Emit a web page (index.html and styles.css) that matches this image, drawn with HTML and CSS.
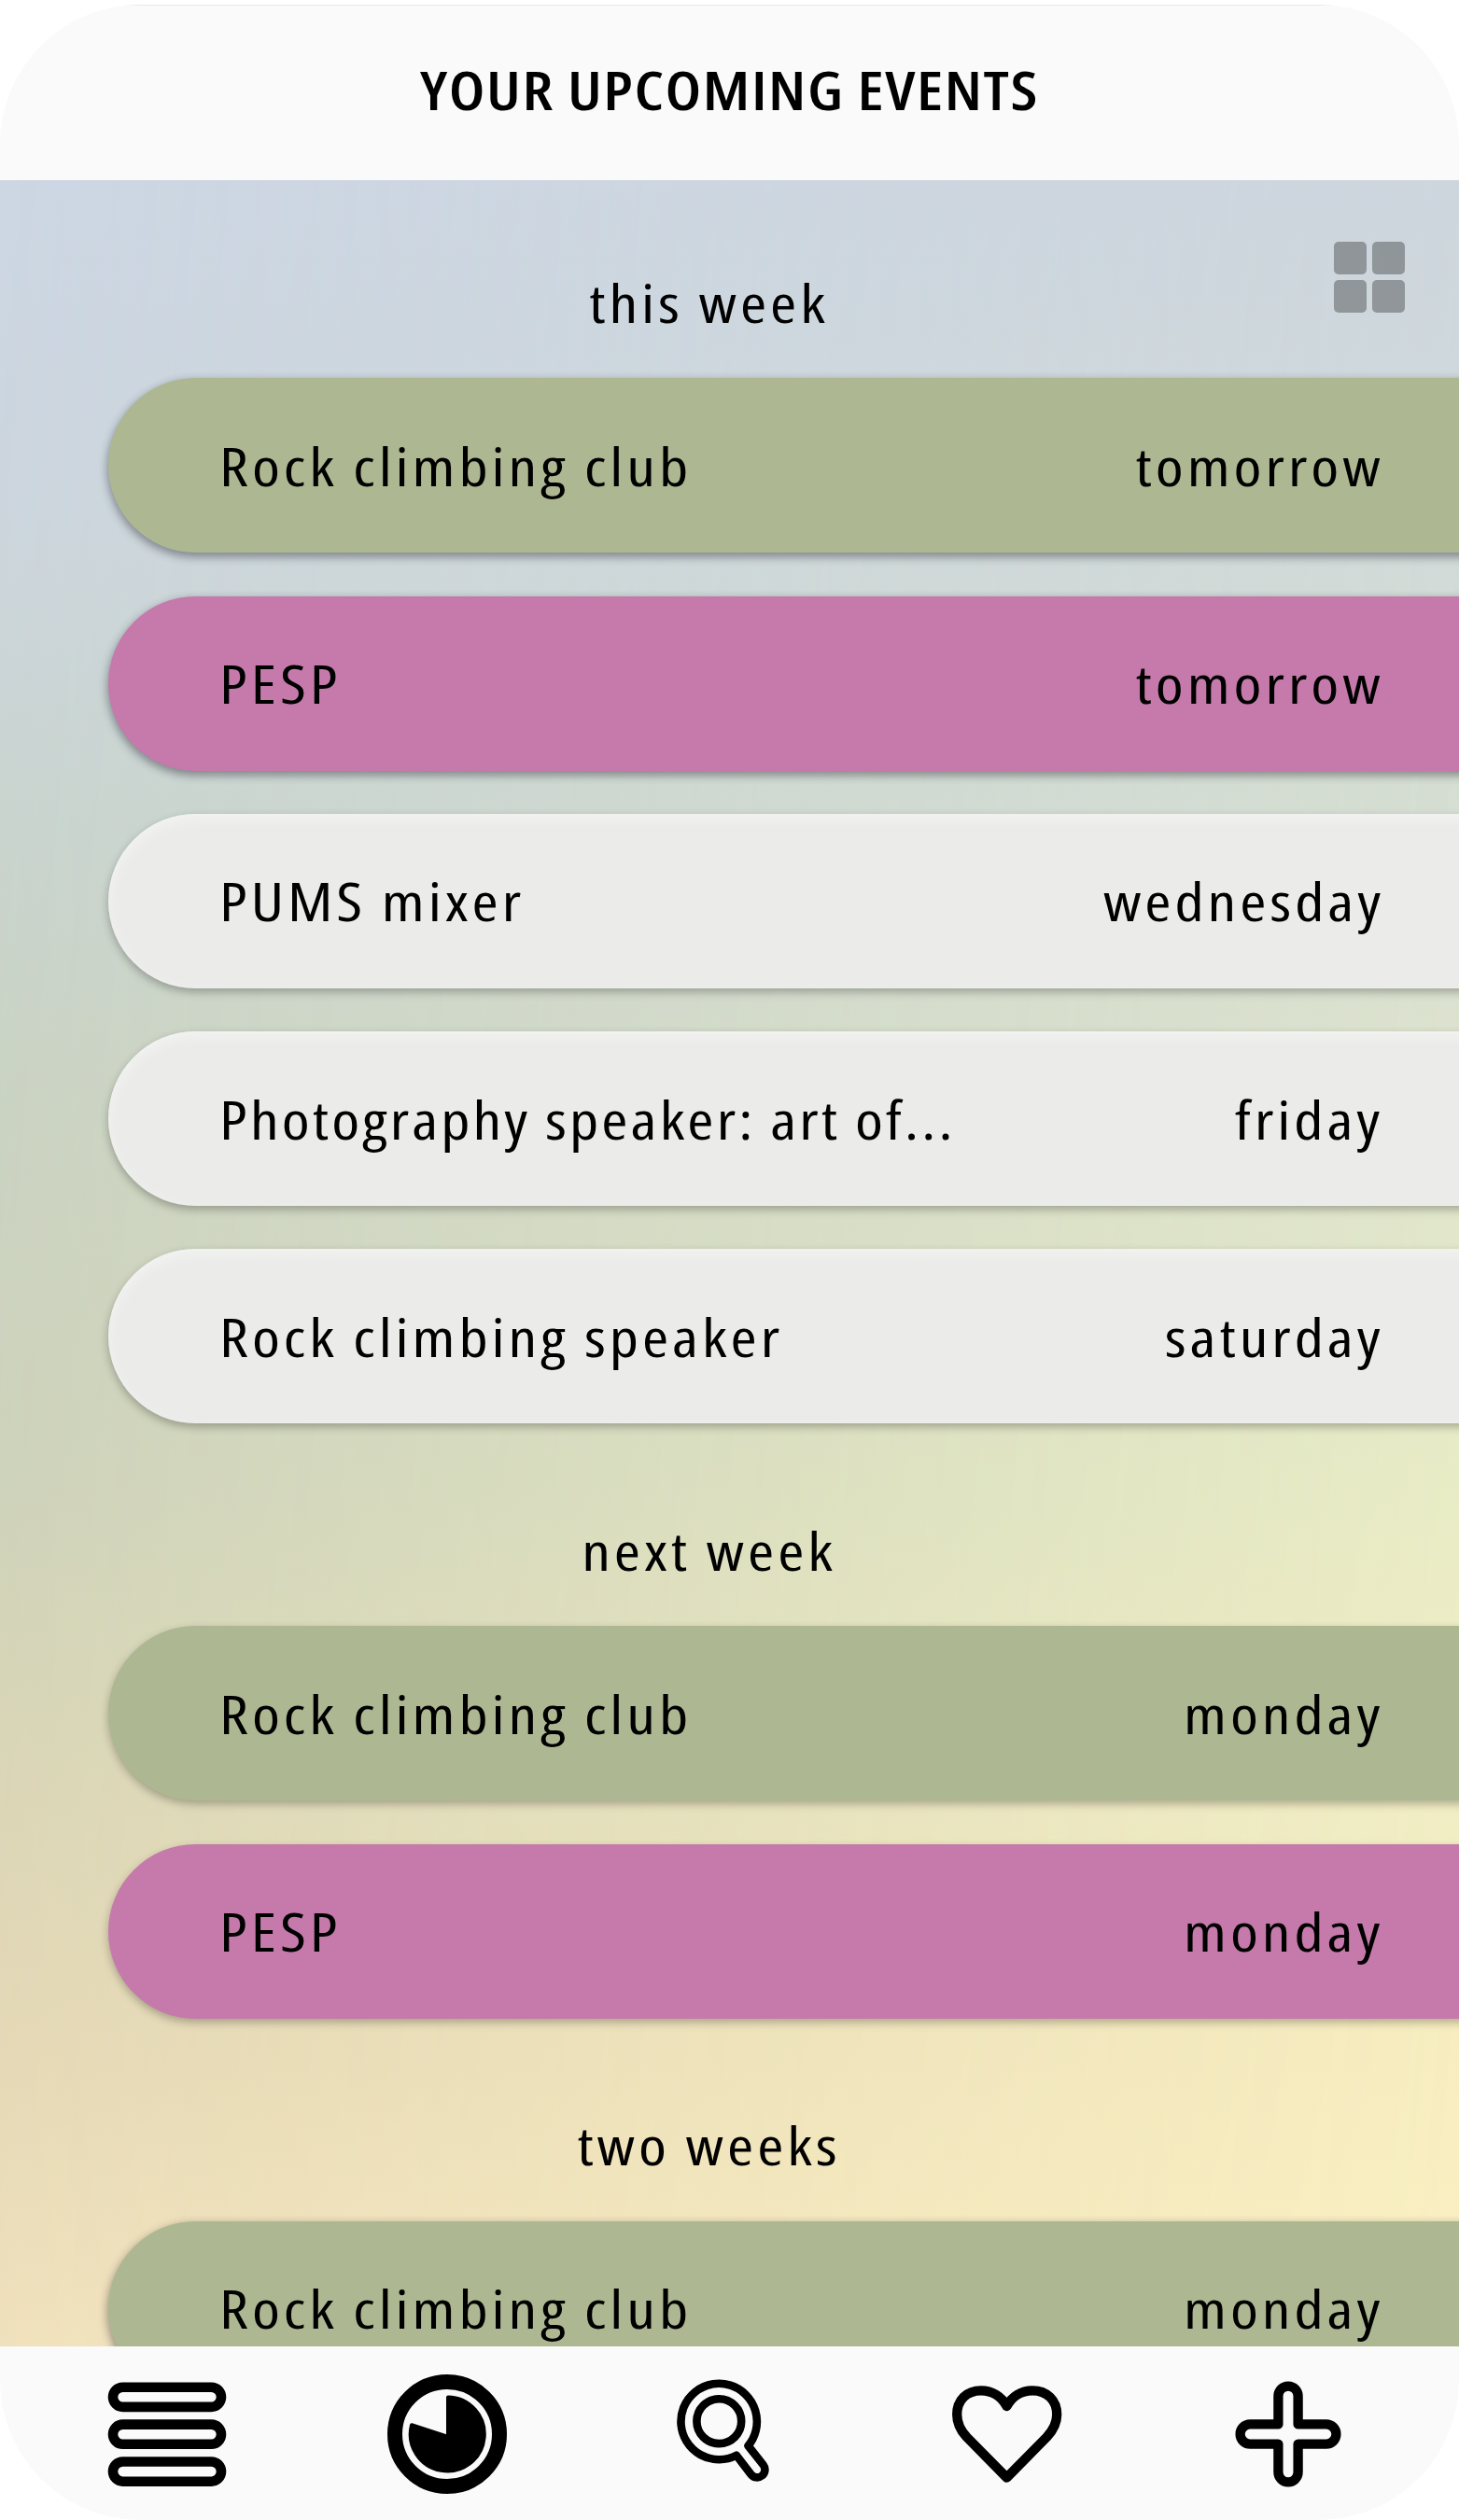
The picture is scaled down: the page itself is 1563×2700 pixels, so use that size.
FILE: index.html
```html
<!DOCTYPE html>
<html lang="en">
<head>
<meta charset="utf-8">
<title>Your upcoming events</title>
<link rel="stylesheet" href="styles.css">
</head>
<body>
<div class="phone">
  <header class="header"><h1 class="title">YOUR UPCOMING EVENTS</h1></header>
  <main class="content">
    <button class="grid-toggle" aria-label="Grid view"><i></i><i></i><i></i><i></i></button>
    <section class="week">
      <h2 class="week-name">this week</h2>
      <div class="event green near"><span class="name">Rock climbing club</span><span class="day">tomorrow</span></div>
      <div class="event pink near"><span class="name">PESP</span><span class="day">tomorrow</span></div>
      <div class="event plain"><span class="name">PUMS mixer</span><span class="day">wednesday</span></div>
      <div class="event plain"><span class="name long">Photography speaker: art of...</span><span class="day">friday</span></div>
      <div class="event plain"><span class="name">Rock climbing speaker</span><span class="day">saturday</span></div>
    </section>
    <section class="week">
      <h2 class="week-name">next week</h2>
      <div class="event green"><span class="name">Rock climbing club</span><span class="day">monday</span></div>
      <div class="event pink"><span class="name">PESP</span><span class="day">monday</span></div>
    </section>
    <section class="week">
      <h2 class="week-name">two weeks</h2>
      <div class="event green near"><span class="name">Rock climbing club</span><span class="day">monday</span></div>
    </section>
  </main>
  <nav class="nav">
    <a class="tab"><svg width="128" height="128" viewBox="0 0 128 128" fill="none" stroke="#000" stroke-width="10.6"><rect x="6" y="13.7" width="116" height="21.2" rx="10.6"/><rect x="6" y="53.6" width="116" height="21.2" rx="10.6"/><rect x="6" y="93.5" width="116" height="21.2" rx="10.6"/></svg></a>
    <a class="tab"><svg width="128" height="128" viewBox="0 0 128 128"><circle cx="64" cy="64" r="56" fill="none" stroke="#000" stroke-width="16"/><path d="M65 24.5A39.5 39.5 0 1 1 26 54.2L65 67Z" stroke="#000" stroke-width="4" stroke-linejoin="round"/></svg></a>
    <a class="tab"><svg width="150" height="150" viewBox="4 4 150 150" fill="none" stroke="#000" stroke-width="8.6" stroke-linejoin="round"><circle cx="70.3" cy="65.2" r="23.9"/><path d="M101.5 91.5L117.6 111.8A8.3 8.3 0 0 1 104.6 122.2L88.8 101.7A40.7 40.7 0 1 1 101.5 91.5Z"/></svg></a>
    <a class="tab"><svg width="160" height="150" viewBox="0 4 160 150" fill="none" stroke="#000" stroke-width="10.3" stroke-linejoin="round"><path d="M79.5 49C74 39 64 32.3 52 32.3C36.5 32.3 26.2 42.5 26.2 58C26.2 66 29.5 74.5 36.5 82L79.5 125.6L122.5 82C129.5 74.5 133.2 66 133.2 58C133.2 42.5 122.5 32.3 107 32.3C95 32.3 85 39 79.5 49Z"/></svg></a>
    <a class="tab"><svg width="128" height="128" viewBox="0 0 128 128" fill="none" stroke="#000" stroke-width="10.3" stroke-linejoin="round"><path d="M53.4 53.4V23.2A10.6 10.6 0 0 1 74.6 23.2V53.4H104.8A10.6 10.6 0 0 1 104.8 74.6H74.6V104.8A10.6 10.6 0 0 1 53.4 104.8V74.6H23.2A10.6 10.6 0 0 1 23.2 53.4Z"/></svg></a>
  </nav>
</div>
</body>
</html>
```
FILE: styles.css
```css
* { box-sizing: border-box; }

body {
  margin: 0;
  background: #fff;
  color: #000;
  font: 400 57px/68px "Open Sans", sans-serif;
  font-stretch: 75%;
  letter-spacing: 3.3px;
}

.phone {
  display: flex;
  flex-direction: column;
  width: 1563px;
  height: 2700px;
  padding-top: 5px;
  overflow: hidden;
}

.header {
  flex: none;
  height: 187.5px;
  padding-top: 57px;
  border-radius: 150px 150px 0 0;
  background: linear-gradient(#e8e8e8, #e8e8e8) 133px 0 / 1297px 1px no-repeat #fafafa;
  text-align: center;
}

/* the condensed face is widened a little */
.title, .week-name, .name, .day { transform: scaleX(1.195); }
.name { transform-origin: left; }
.day { transform-origin: right; }

.title {
  margin: 0;
  font-size: 57px;
  font-weight: 600;
  line-height: 68px;
  letter-spacing: 1.3px;
}

.content {
  position: relative;
  z-index: 0;
  flex: 1;
  min-height: 0;
  padding: 98.5px 0 0 116px;
  overflow: hidden;
  display: flex;
  flex-direction: column;
  gap: 102.7px;
  background: linear-gradient(#cdd7e4 0%, #cdd6de 15%, #c9d4cf 30%, #cad2c1 44%, #cdd1ba 60%, #d8d4b6 73%, #e4d7b6 87%, #f0e0bd 100%);
}

/* warmer right side of the backdrop, faded in across the width */
.content::before {
  content: "";
  position: absolute;
  inset: 0;
  z-index: -1;
  background: linear-gradient(#cdd5dc 0%, #cfd8da 10%, #d7dfd2 30%, #e2e7cc 47%, #e9edc6 60%, #f1eec5 74%, #f7edc0 86%, #faf0c2 100%);
  -webkit-mask-image: linear-gradient(95deg, transparent, #000);
  mask-image: linear-gradient(95deg, transparent, #000);
}

.grid-toggle {
  position: absolute;
  top: 66.5px;
  right: 58px;
  display: grid;
  grid-template-columns: 35px 35px;
  grid-auto-rows: 35px;
  gap: 5.6px;
  padding: 0;
  border: 0;
  background: none;
}

.grid-toggle i {
  border-radius: 5px;
  background: rgba(0, 0, 0, .3);
}

.week {
  flex: none;
  display: flex;
  flex-direction: column;
  gap: 46.3px;
}

.week-name {
  width: 1287px;
  margin: 0;
  font-size: 57px;
  font-weight: 400;
  line-height: 67px;
  height: 68px;
  text-align: center;
}

.event {
  display: flex;
  align-items: center;
  justify-content: space-between;
  height: 187px;
  margin-right: -30px;
  padding: 0 110.5px 0 119px;
  border-radius: 93.5px 0 0 93.5px;
  box-shadow: 0 4px 10px rgba(0, 0, 0, .27);
  white-space: nowrap;
}

.long { letter-spacing: 2.6px; }
.near { box-shadow: 0 4px 10px 1px rgba(40, 40, 50, .45); }
.green { background: #adb892; }
.pink { background: #c57aab; }

.plain {
  background: #ebebea;
  box-shadow: 0 4px 10px rgba(0, 0, 0, .27), inset 0 5px 16px rgba(245, 248, 242, .8);
}

.nav {
  flex: none;
  display: flex;
  height: 186.5px;
  padding: 3px 33.4px 0 28.4px;
  border-radius: 0 0 150px 150px;
  background: #fafafa;
}

.tab {
  flex: 1;
  display: flex;
  align-items: center;
  justify-content: center;
}

.tab svg { flex: none; display: block; }
```
